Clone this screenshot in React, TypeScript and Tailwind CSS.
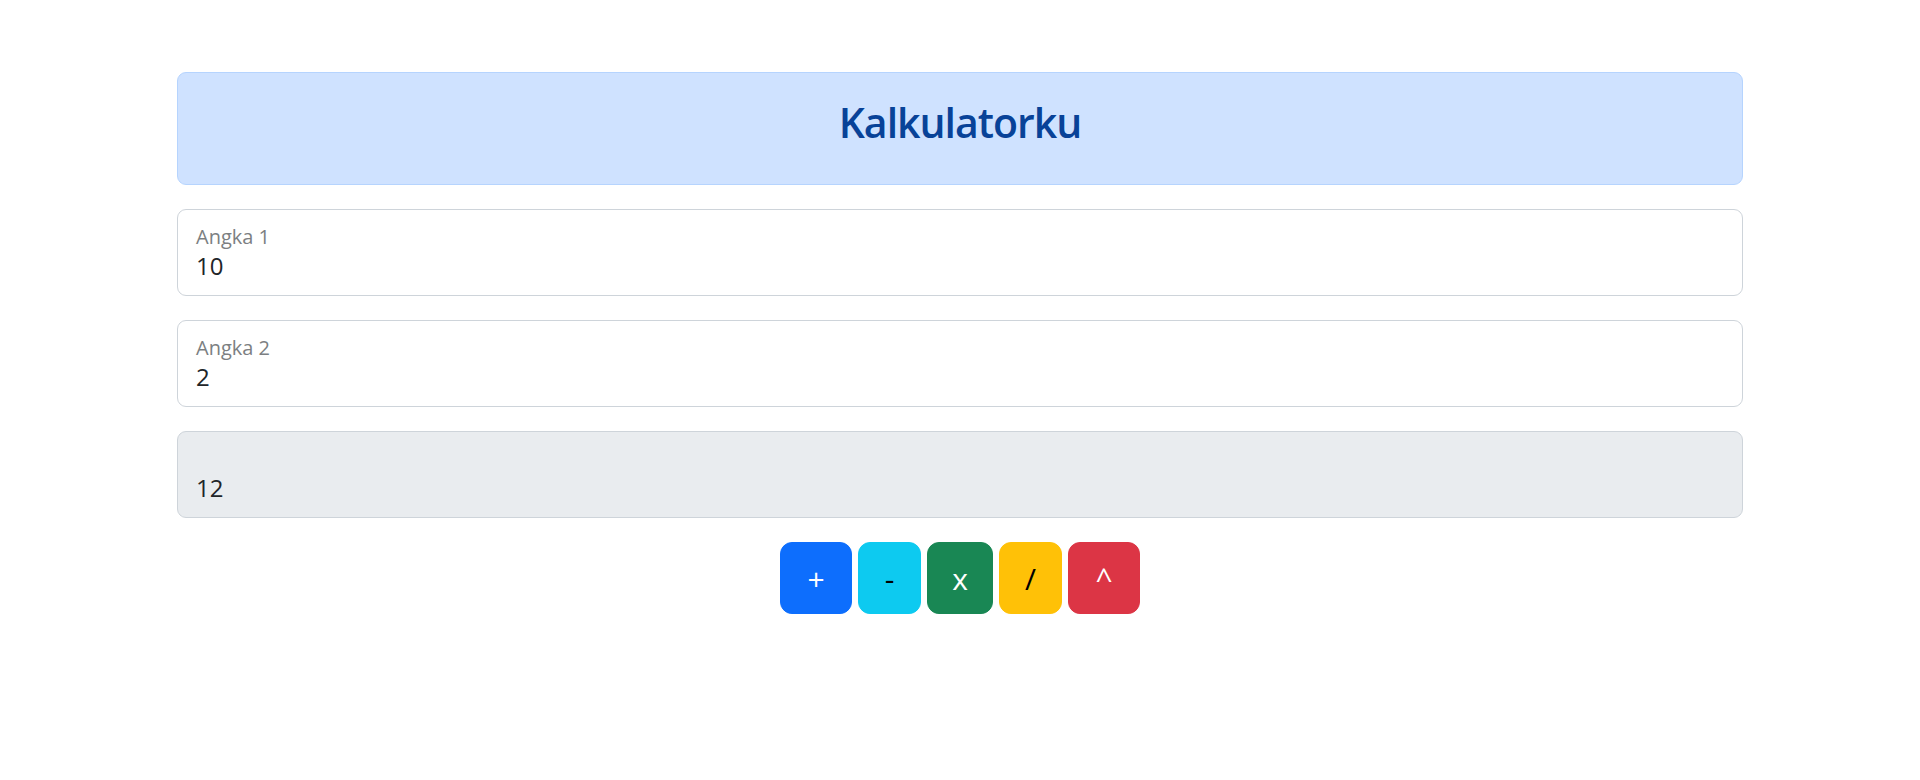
import React from 'react';

const fields = [
  { label: 'Angka 1', value: '10', readOnly: false },
  { label: 'Angka 2', value: '2', readOnly: false },
  { label: '', value: '12', readOnly: true },
];

const buttons = [
  { op: '+', cls: 'w-[72px] bg-[#0d6efd] border-[#0d6efd] text-white' },
  { op: '-', cls: 'w-[63px] bg-[#0dcaf0] border-[#0dcaf0] text-black' },
  { op: 'x', cls: 'w-[66px] bg-[#198754] border-[#198754] text-white' },
  { op: '/', cls: 'w-[63px] bg-[#ffc107] border-[#ffc107] text-black' },
  { op: '^', cls: 'w-[72px] bg-[#dc3545] border-[#dc3545] text-white' },
];

const App = () => {
  return (
    <div className="min-h-[780px] bg-white pt-[72px] font-['Open_Sans',sans-serif]">
      <div className="mx-auto w-[1566px]">
        {/* Header */}
        <div className="mb-[24px] rounded-[9px] border border-[#b6d4fe] bg-[#cfe2ff] px-[24px] pt-[24px] pb-[37px] text-center">
          <h3 className="text-[41px] leading-[50px] font-semibold text-[#084298] tracking-[-1px]">Kalkulatorku</h3>
        </div>

        {/* Inputs */}
        {fields.map((field, index) => (
          <div
            key={index}
            className={`mb-[24px] h-[87px] rounded-[9px] border border-[#ced4da] px-[18px] pt-[13px] ${
              field.readOnly ? 'bg-[#e9ecef]' : 'bg-white'
            }`}
          >
            <div className="h-[28px] text-[20px] leading-[28px] text-[#7c7f82]">{field.label}</div>
            <div className="text-[24px] leading-[30px] text-[#212529]">{field.value}</div>
          </div>
        ))}

        {/* Operators */}
        <div className="flex justify-center gap-[6px]">
          {buttons.map((btn) => (
            <button
              key={btn.op}
              className={`flex h-[72px] items-center justify-center rounded-[12px] border text-[30px] leading-[45px] ${btn.cls}`}
            >
              {btn.op}
            </button>
          ))}
        </div>
      </div>
    </div>
  );
};

export default App;
